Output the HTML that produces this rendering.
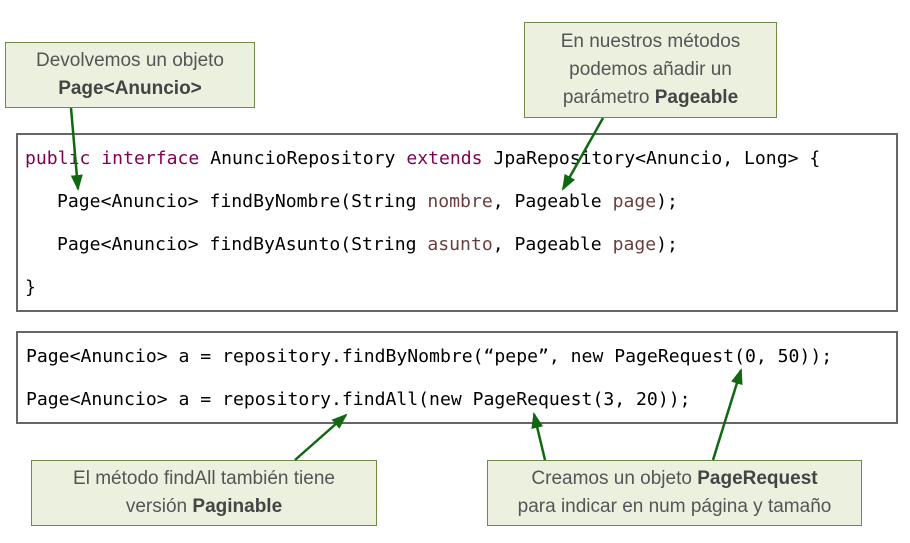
<!DOCTYPE html>
<html><head><style>
body{margin:0;width:910px;height:543px;background:#fff;position:relative;overflow:hidden}
.code{position:absolute;left:16px;width:882px;border:2px solid #666;box-sizing:border-box;background:#fff}
.ln{position:absolute;font-family:"DejaVu Sans Mono","Liberation Mono",monospace;font-size:18.1px;color:#000;white-space:pre;line-height:20px}
.k{color:#7f0055}.p{color:#6a3e3e}
.co{position:absolute;background:#ebf1de;border:1.5px solid #6f8a4a;box-sizing:border-box;font-family:"Liberation Sans",sans-serif;font-size:19px;color:#555;text-align:center;line-height:28px;display:flex;flex-direction:column;justify-content:center}
b{color:#444}
svg{position:absolute;left:0;top:0}
</style></head><body>
<div class="code" style="top:133px;height:179px"></div>
<div class="code" style="top:331px;height:93px"></div>
<div class="ln" style="left:25px;top:149px"><span class="k">public</span> <span class="k">interface</span> AnuncioRepository <span class="k">extends</span> JpaRepository&lt;Anuncio, Long&gt; {</div>
<div class="ln" style="left:57px;top:192px">Page&lt;Anuncio&gt; findByNombre(String <span class="p">nombre</span>, Pageable <span class="p">page</span>);</div>
<div class="ln" style="left:57px;top:235px">Page&lt;Anuncio&gt; findByAsunto(String <span class="p">asunto</span>, Pageable <span class="p">page</span>);</div>
<div class="ln" style="left:25px;top:278px">}</div>
<div class="ln" style="left:26px;top:347px">Page&lt;Anuncio&gt; a = repository.findByNombre(“pepe”, new PageRequest(0, 50));</div>
<div class="ln" style="left:26px;top:390px">Page&lt;Anuncio&gt; a = repository.findAll(new PageRequest(3, 20));</div>
<div class="co" style="left:5px;top:42px;width:250px;height:66px"><div>Devolvemos un objeto</div><div><b>Page&lt;Anuncio&gt;</b></div></div>
<div class="co" style="left:524px;top:22px;width:253px;height:96px"><div>En nuestros métodos</div><div>podemos añadir un</div><div>parámetro <b>Pageable</b></div></div>
<div class="co" style="left:31px;top:460px;width:346px;height:66px"><div>El método findAll también tiene</div><div>versión <b>Paginable</b></div></div>
<div class="co" style="left:487px;top:460px;width:375px;height:66px"><div>Creamos un objeto <b>PageRequest</b></div><div>para indicar en num página y tamaño</div></div>
<svg width="910" height="543">
<defs><marker id="m" markerWidth="16" markerHeight="16" refX="14" refY="8" orient="auto" markerUnits="userSpaceOnUse"><path d="M0,2 L16,8 L0,14z" fill="#106810"/></marker></defs>
<g stroke="#106810" stroke-width="2.5" fill="none" marker-end="url(#m)">
<line x1="71" y1="108" x2="78" y2="189"/>
<line x1="603" y1="118" x2="563" y2="189"/>
<line x1="295" y1="460" x2="346" y2="415"/>
<line x1="545" y1="460" x2="534" y2="414"/>
<line x1="713" y1="460" x2="741" y2="370"/>
</g></svg>
</body></html>
